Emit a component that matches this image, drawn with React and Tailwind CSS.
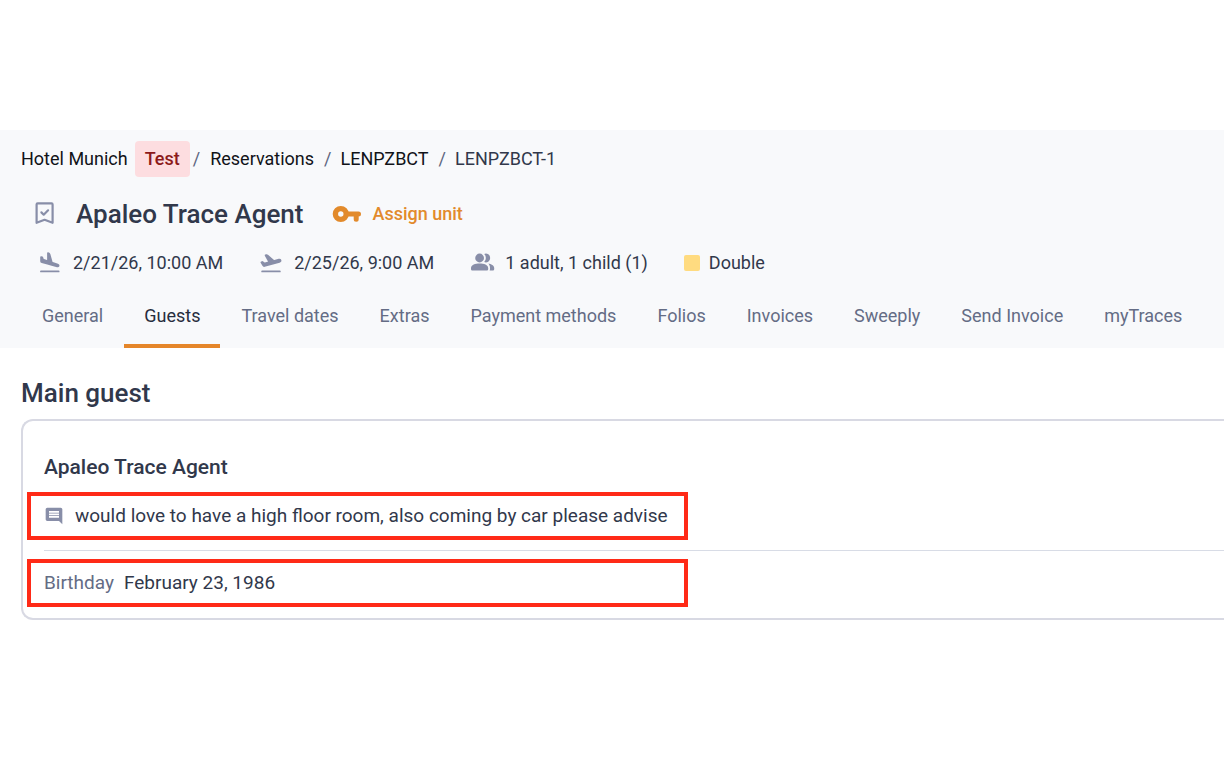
import { MdComment } from 'react-icons/md'

const CRUMBS = ['Reservations', 'LENPZBCT']

const TABS = [
  'General',
  'Guests',
  'Travel dates',
  'Extras',
  'Payment methods',
  'Folios',
  'Invoices',
  'Sweeply',
  'Send Invoice',
  'myTraces',
]

export default function App() {
  return (
    <main className="min-h-screen overflow-x-hidden bg-white pt-[130px] pb-12 font-['Roboto',sans-serif] text-lg leading-6 text-[#31384b]">
      <header className="bg-[#f8f9fb] pt-[11px]">
        <Breadcrumbs />
        <div className="mt-[19px] flex items-center px-8">
          <BookmarkCheck />
          <h1 className="ml-[19px] text-[26px] leading-9 font-medium">Apaleo Trace Agent</h1>
          <button type="button" className="ml-7 flex items-center gap-[11px] font-medium text-[#e28a2b]">
            <KeyIcon />
            Assign unit
          </button>
        </div>
        <StayInfo />
        <Tabs active="Guests" />
      </header>
      <GuestSection />
    </main>
  )
}

function Breadcrumbs() {
  return (
    <nav aria-label="Breadcrumb" className="flex h-9 items-center px-[21px] text-[#111318]">
      <a href="#hotel">Hotel Munich</a>
      <span className="ml-[7px] flex h-9 items-center rounded bg-[#fddde0] px-[10px] font-medium text-[#8c1a1a]">Test</span>
      {CRUMBS.map((c, i) => (
        <span key={c} className="flex">
          <span className={i === 0 ? 'mr-[10px] ml-[3px] text-[#5d6580]' : 'mr-[9px] ml-[10px] text-[#5d6580]'}>/</span>
          <a href={`#${c}`}>{c}</a>
        </span>
      ))}
      <span className="mr-[9px] ml-[10px] text-[#5d6580]">/</span>
      <span className="text-[#31384b]">LENPZBCT-1</span>
    </nav>
  )
}

function StayInfo() {
  return (
    <div className="mt-[19px] flex h-6 items-center gap-9 px-[38px]">
      <span className="flex items-center gap-[11px]">
        <PlaneLanding />
        2/21/26, 10:00 AM
      </span>
      <span className="flex items-center gap-[11px]">
        <PlaneTakeoff />
        2/25/26, 9:00 AM
      </span>
      <span className="flex items-center gap-[9px]">
        <PeopleIcon />
        1 adult, 1 child (1)
      </span>
      <span className="flex items-center gap-[9px]">
        <span className="h-4 w-4 rounded-xs bg-[#ffdb80]" />
        Double
      </span>
    </div>
  )
}

function Tabs({ active }) {
  return (
    <nav aria-label="Reservation" className="mt-[13px] flex gap-px px-[22px]">
      {TABS.map((t) => (
        <a
          key={t}
          href={`#${t}`}
          className={`flex h-[60px] shrink-0 items-center border-b-4 px-5 ${
            t === active ? 'border-[#e5862a] text-[#272d3e]' : 'border-transparent text-[#646c85]'
          }`}
        >
          {t}
        </a>
      ))}
    </nav>
  )
}

function GuestSection() {
  return (
    <section className="pt-[29px] pl-[21px]">
      <h2 className="text-[26px] leading-8 font-medium">Main guest</h2>
      <div className="mt-[10px] rounded-l-xl border-y-2 border-l-2 border-[#d8d9e3] pt-[34px] pb-[11px]">
        <h3 className="pl-[21px] text-[21px] leading-6 font-medium">Apaleo Trace Agent</h3>
        <div className="mt-[13px] ml-1 flex h-12 w-[661px] items-center gap-[11px] border-4 border-[#ff2a17] pl-[13px] text-[19px]">
          <MdComment size={20} className="shrink-0 text-[#888ea8]" />
          <p className="whitespace-nowrap">would love to have a high floor room, also coming by car please advise</p>
        </div>
        <hr className="mt-[10px] mb-2 ml-[21px] border-t border-[#d8dce6]" />
        <dl className="ml-1 flex h-12 w-[661px] items-center gap-[10px] border-4 border-[#ff2a17] pl-[13px] text-[19px]">
          <dt className="text-[#646c85]">Birthday</dt>
          <dd>February 23, 1986</dd>
        </dl>
      </div>
    </section>
  )
}

function BookmarkCheck() {
  return (
    <svg width="25" height="24" viewBox="0 0 25 24" fill="none" stroke="#888ea8" strokeWidth="2.2" strokeLinecap="round" strokeLinejoin="round">
      <path d="M5.600 1.400h14a1 1 0 0 1 1 1v18.400L12.600 17.800 4.600 20.800V2.400a1 1 0 0 1 1-1z" />
      <path d="M9.400 10.400l2.300 2.300 4.400-4.400" />
    </svg>
  )
}

function KeyIcon() {
  return (
    <svg width="30" height="20" viewBox="0 0 30 20" fill="none" stroke="#e28a2b">
      <circle cx="8.8" cy="10" r="5.4" strokeWidth="5.400" />
      <path d="M15 10h11.5M24.2 10.5v4.700" strokeWidth="5" strokeLinecap="round" />
    </svg>
  )
}

function PlaneLanding() {
  return (
    <svg width="24" height="24" viewBox="0 0 24 24" fill="#888ea8" stroke="#888ea8" strokeLinecap="round" strokeLinejoin="round">
      <path d="M3 20.4h17.600" strokeWidth="1.900" />
      <path strokeWidth="1.800" d="M9.500 12.600l4.300 1.200 5.400 1.500c.7.2 1.200-.1 1.300-.6.1-.5-.2-1-.8-1.200l-5.900-2-2.400-8.500c-.1-.4-.3-.6-.7-.7l-.7-.2v8.200L5 8.500l-.8-2.100-1.100-.3v4.100c0 .5.300.800.800.900z" />
    </svg>
  )
}

function PlaneTakeoff() {
  return (
    <svg width="24" height="24" viewBox="0 0 24 24" fill="#888ea8" stroke="#888ea8" strokeLinecap="round" strokeLinejoin="round">
      <path d="M3.200 20.400h17.600" strokeWidth="1.900" />
      <path strokeWidth="1.800" d="M21.500 9.400c-.2-.6-.8-.9-1.600-.7L14.700 10 8.400 4.400c-.4-.3-.7-.3-1.100-.2l-.7.2 3.700 6.700-5 1.400-1.900-1.500-1 .3 1.800 3.100c.3.500.7.700 1.300.5l14.900-4.100c.8-.2 1.300-.7 1.100-1.400z" />
    </svg>
  )
}

function PeopleIcon() {
  return (
    <svg width="26" height="24" viewBox="1 1 26 24" fill="#888ea8">
      <circle cx="10.6" cy="8" r="4.4" />
      <path d="M2 18c0-3.2 4.3-4.600 8.600-4.600s8.600 1.400 8.600 4.600v.9c0 .9-.7 1.600-1.600 1.600h-14c-.9 0-1.600-.7-1.600-1.600z" />
      <path d="M15.2 12.100a5.900 5.900 0 0 0 0-8.200 4.4 4.4 0 1 1 0 8.200z" />
      <path d="M19.400 13.600c2.600.5 5.800 1.700 5.800 4.400v.9c0 .9-.7 1.600-1.600 1.600h-3c.3-.5.400-1 .4-1.600V18c0-1.800-.6-3.300-1.600-4.400z" />
    </svg>
  )
}
